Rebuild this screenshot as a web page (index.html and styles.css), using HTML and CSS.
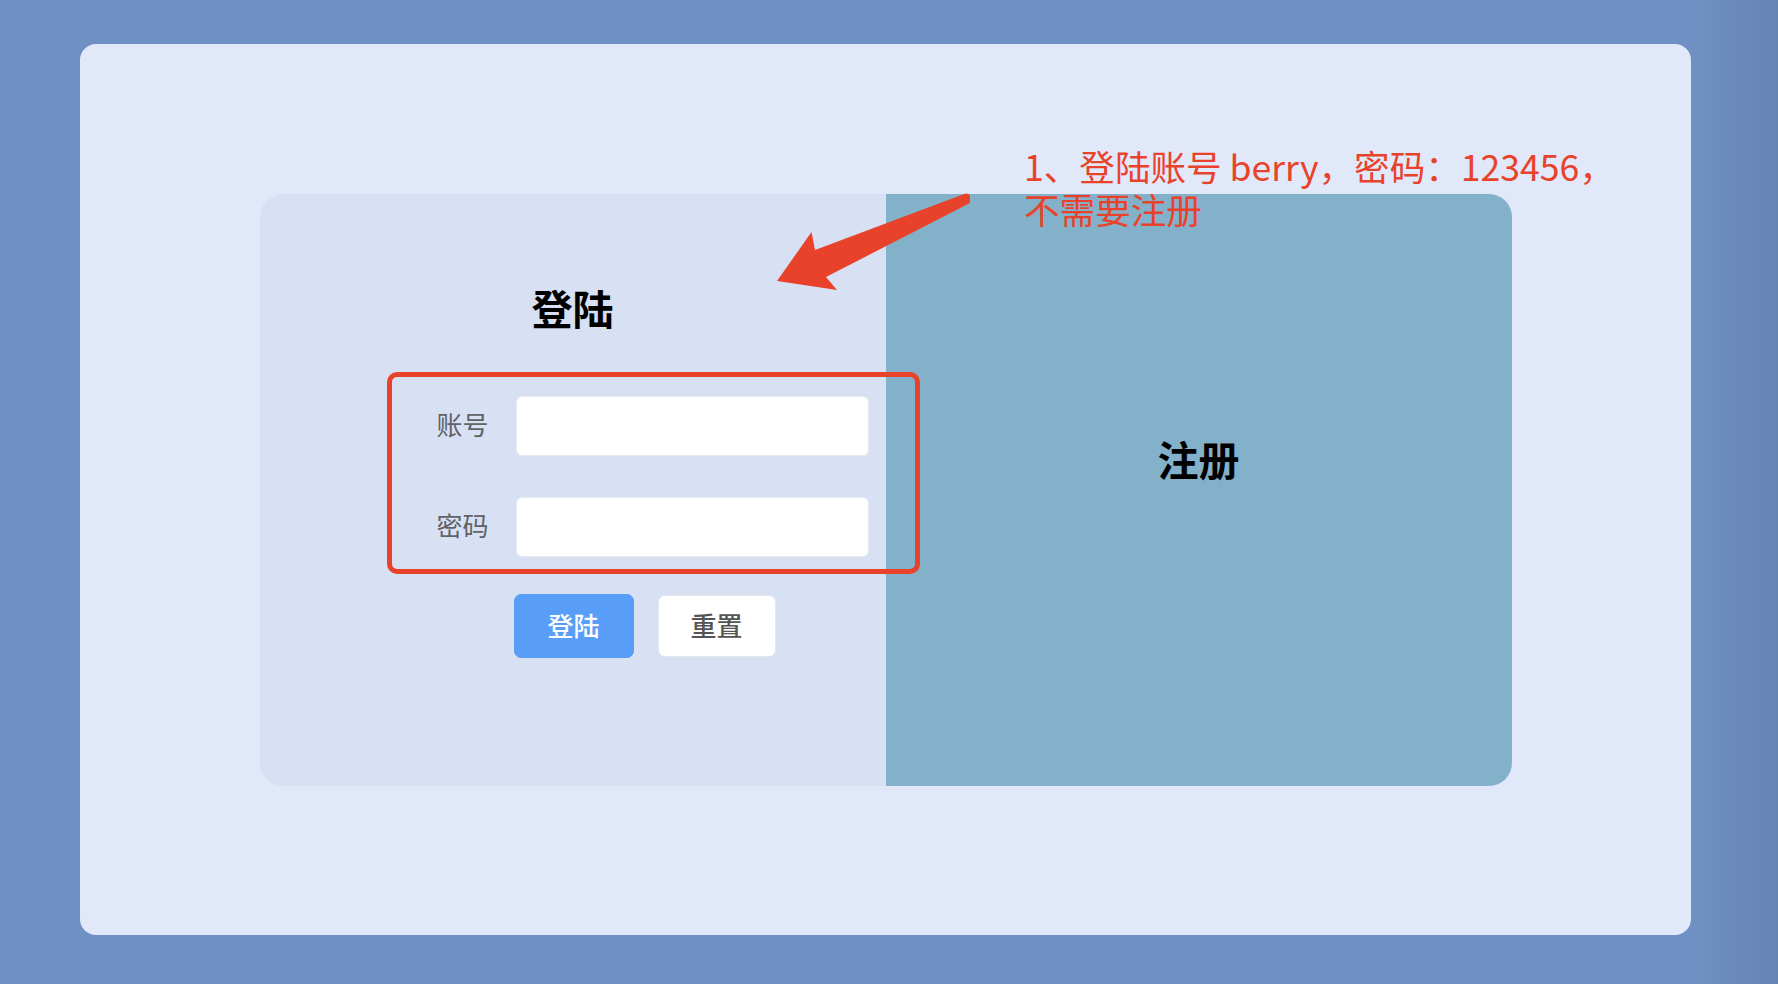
FILE: index.html
```html
<!DOCTYPE html>
<html lang="zh">
<head>
<meta charset="utf-8">
<title>登陆</title>
<link rel="stylesheet" href="styles.css">
</head>
<body>
<div class="window">
  <div class="panel">
    <section class="half login">
      <h2 class="title">登陆</h2>
      <form class="form">
        <div class="row">
          <label class="label">账号</label>
          <input class="input" type="text">
        </div>
        <div class="row">
          <label class="label">密码</label>
          <input class="input" type="password">
        </div>
        <div class="actions">
          <button type="button" class="btn btn-primary">登陆</button>
          <button type="button" class="btn btn-default">重置</button>
        </div>
      </form>
    </section>
    <section class="half register">
      <h2 class="title">注册</h2>
    </section>
    <div class="mark-box"></div>
  </div>
  <div class="note">1、登陆账号 berry，密码：123456，<br>不需要注册</div>
  <svg class="arrow" width="200" height="110" viewBox="770 190 200 110" xmlns="http://www.w3.org/2000/svg">
    <path d="M777 281 L811.5 232 L815 250 L963.5 194.2 A5.2 5.2 0 0 1 968.5 203.8 L826 277 L837 290 Z" fill="#e8432a"/>
  </svg>
</div>
</body>
</html>
```

FILE: styles.css
```css
* { box-sizing: border-box; }

html, body { height: 100%; }

body {
  margin: 0;
  padding: 44px 87px 49px 80px;
  background: linear-gradient(to right, #6f90c2 0, #6f90c2 calc(100% - 80px), #6783b4 100%);
  font-family: "Noto Sans CJK SC", "Noto Sans", sans-serif;
}

.window {
  position: relative;
  height: 891px;
  background: #e1e8fa;
  border-radius: 16px;
  display: flex;
  align-items: center;
  justify-content: center;
}

.panel {
  position: relative;
  width: 1252px;
  height: 592px;
  display: flex;
}

.half {
  flex: 1 1 0;
  display: flex;
  flex-direction: column;
}

.login {
  background: #d8e0f4;
  border-radius: 23px 0 0 23px;
  align-items: center;
  padding-top: 89px;
}

.register {
  background: #83b1ca;
  border-radius: 0 23px 23px 0;
  align-items: center;
  justify-content: center;
  padding-bottom: 64px;
}

.title {
  margin: 0;
  font-size: 41px;
  line-height: 48px;
  font-weight: 700;
  color: #000;
}

.form {
  align-self: flex-start;
  margin-left: 156px;
  margin-top: 65px;
  display: flex;
  flex-direction: column;
  gap: 41px;
}

.row {
  display: flex;
  align-items: center;
}

.label {
  width: 100px;
  padding-right: 27px;
  padding-bottom: 4px;
  text-align: right;
  font-size: 26px;
  color: #606266;
}

.input {
  width: 353px;
  height: 60px;
  border: 1px solid #e6e9f0;
  border-radius: 6px;
  background: #fff;
  font-size: 24px;
  padding: 0 16px;
  outline: none;
}

.actions {
  display: flex;
  gap: 24px;
  margin-left: 98px;
  margin-top: -4px;
}

.btn {
  font-family: inherit;
  font-size: 26px;
  font-weight: 500;
  border-radius: 7px;
  padding: 0 0 3px;
  cursor: pointer;
}

.btn-primary {
  width: 120px;
  height: 64px;
  background: #589df8;
  border: 1px solid #589df8;
  color: #fff;
}

.btn-default {
  width: 118px;
  height: 62px;
  margin-top: 1px;
  background: #fff;
  border: 1px solid #e4e7ed;
  color: #555;
}

.mark-box {
  position: absolute;
  left: 127px;
  top: 178px;
  width: 533px;
  height: 202px;
  border: 5px solid #e8432a;
  border-radius: 10px;
  pointer-events: none;
}

.note {
  position: absolute;
  left: 944px;
  top: 100px;
  font-size: 35.6px;
  line-height: 43px;
  color: #e8432a;
  white-space: nowrap;
}

.arrow {
  position: absolute;
  left: 690px;
  top: 146px;
}
```
